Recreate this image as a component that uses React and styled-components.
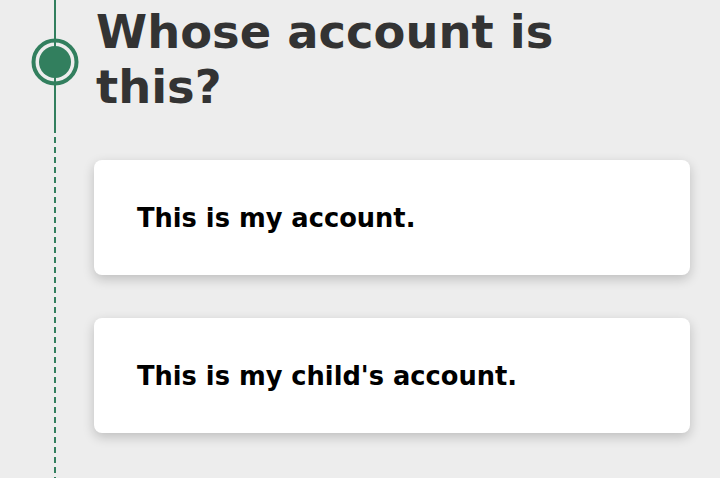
import React from 'react';
import styled, { createGlobalStyle } from 'styled-components';

const GREEN = '#327f5e';

const GlobalStyle = createGlobalStyle`
  html, body {
    margin: 0;
    padding: 0;
    background: #ededed;
    font-family: "DejaVu Sans", "Liberation Sans", sans-serif;
  }
`;

const Page = styled.div`
  display: flex;
  min-height: 478px;
  overflow: hidden;
`;

const Timeline = styled.div`
  width: 94px;
  flex-shrink: 0;
  display: flex;
  flex-direction: column;
`;

const Solid = styled.div`
  width: 2px;
  margin-left: 54px;
  height: ${(p) => p.$h}px;
  background: ${GREEN};
`;

const Dashed = styled.div`
  width: 2px;
  margin-left: 54px;
  flex: 1;
  background: repeating-linear-gradient(
    to bottom,
    ${GREEN} 0 6px,
    transparent 6px 10px
  );
`;

const Marker = styled.svg`
  display: block;
  margin-left: 31px;
`;

const Content = styled.div`
  width: 596px;
  display: flex;
  flex-direction: column;
`;

const Heading = styled.h1`
  margin: 5px 0 0 2px;
  max-width: 500px;
  font-size: 46.4px;
  line-height: 55px;
  font-weight: 700;
  color: #333333;
`;

const Options = styled.div`
  display: flex;
  flex-direction: column;
  gap: 43px;
  margin-top: 45px;
`;

const Card = styled.button`
  height: 115px;
  border: none;
  border-radius: 8px;
  background: #ffffff;
  box-shadow: 0 4px 12px rgba(0, 0, 0, 0.2);
  padding: 0 0 0 43px;
  display: flex;
  align-items: center;
  text-align: left;
  font-family: inherit;
  font-size: 25.7px;
  font-weight: 700;
  color: #000000;
  cursor: pointer;
`;

const options = ['This is my account.', "This is my child's account."];

export default function App() {
  return (
    <>
      <GlobalStyle />
      <Page>
        <Timeline>
          <Solid $h={38} />
          <Marker width="48" height="48" viewBox="0 0 48 48">
            <line x1="24" y1="0" x2="24" y2="48" stroke={GREEN} strokeWidth="2" />
            <circle cx="24" cy="24" r="21.5" fill="none" stroke={GREEN} strokeWidth="4" />
            <circle cx="24" cy="24" r="16" fill={GREEN} />
          </Marker>
          <Solid $h={41} />
          <Dashed />
        </Timeline>
        <Content>
          <Heading>Whose account is this?</Heading>
          <Options>
            {options.map((o) => (
              <Card key={o}>{o}</Card>
            ))}
          </Options>
        </Content>
      </Page>
    </>
  );
}
